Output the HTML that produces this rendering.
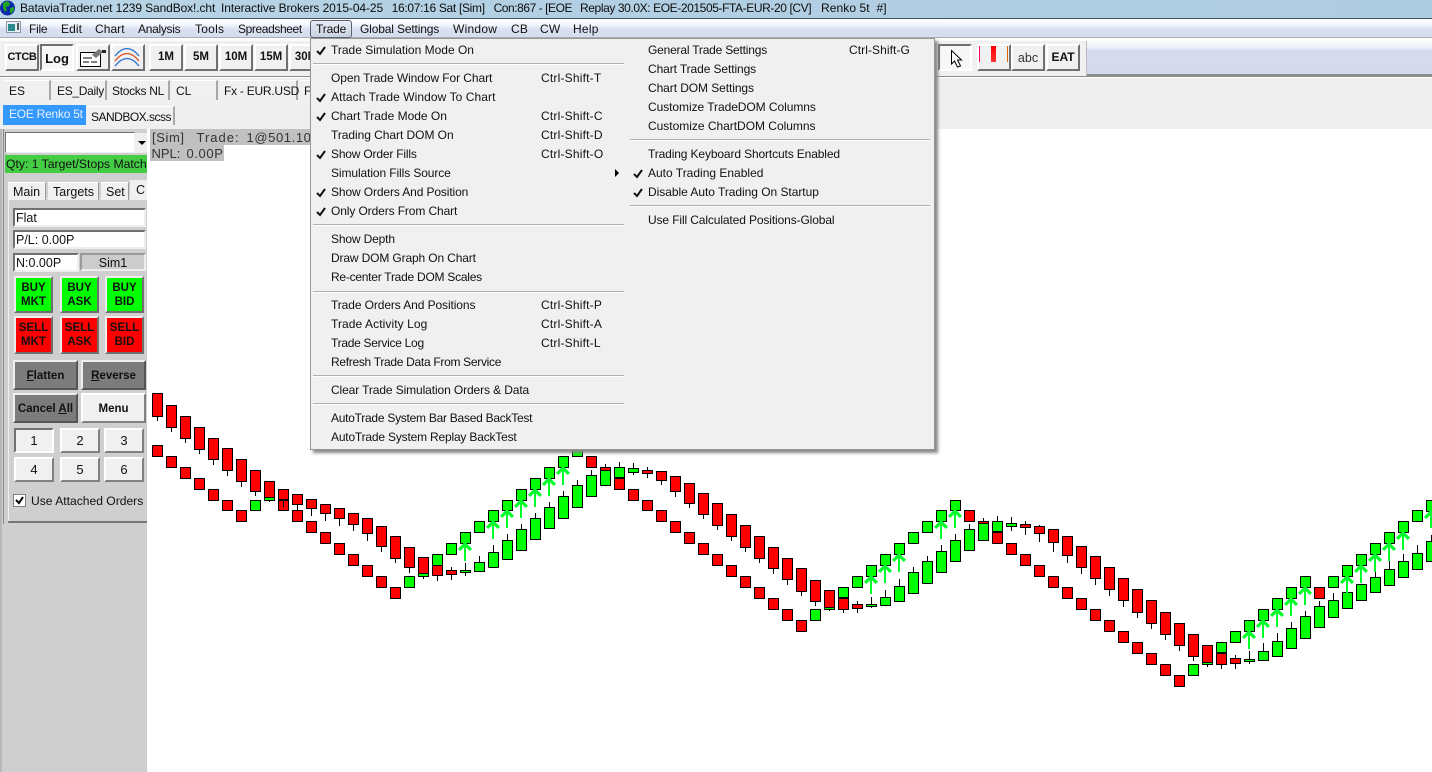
<!DOCTYPE html>
<html><head><meta charset="utf-8"><title>BataviaTrader</title>
<style>
html,body{margin:0;padding:0;width:1432px;height:772px;overflow:hidden;background:#fff}
body{position:relative;font:12px/16px "Liberation Sans",sans-serif;color:#111}
div,svg{position:absolute;box-sizing:border-box}
.t{white-space:pre;height:16px;line-height:16px}
.b{background:#f0f0f0;border:2px solid;border-color:#fff #707070 #707070 #fff;text-align:center;font-weight:bold;font-size:11.5px;color:#111;width:34px;height:27px;top:44px;line-height:23px}
.tab{background:#f0f0f0;border-right:2px solid #a8a8a8;border-top:1px solid #fff;padding-left:4px;line-height:20px;font-size:12px;white-space:pre}
.sep{height:2px;background:#b0b0b0;border-bottom:1px solid #fff}
.o{background:#fff;border:2px solid;border-color:#707070 #eee #eee #707070;padding-left:1px;line-height:17px;font-size:12.5px}
.k{border:2px solid;border-color:#eee #707070 #707070 #eee;text-align:center;font-weight:bold;font-size:11.5px;line-height:14px;padding-top:3px;color:#111}
.g{background:#00ff00}.r{background:#ff0000}
.gb{background:#7c7c7c;border:2px solid;border-color:#eee #555 #555 #eee;text-align:center;font-weight:bold;font-size:11.5px;line-height:28px;color:#111}
.n{background:#f0f0f0;border:2px solid;border-color:#fff #808080 #808080 #fff;text-align:center;line-height:21px;font-size:13px}
.m{margin-top:1px}
.s{margin-top:1px;letter-spacing:.2px}
.st{font-size:13px;color:#333;white-space:pre;height:16px;line-height:17px}
.h{top:0;font-size:12px;color:#0c0c0c}
</style></head><body>

<!-- chart -->
<svg width="1432" height="772" style="left:0;top:0" shape-rendering="crispEdges">
<path fill="none" stroke="#000" d="M157.5 417V421M171.5 428V432M185.5 439V443M199.5 450V454M213.5 460V465M227.5 471V476M241.5 482V487M255.5 492V496M269.5 501V502M297.5 505V510M311.5 509V516M325.5 514V521M339.5 519V526M353.5 525V531M367.5 534V541M381.5 547V552M395.5 559V563M409.5 568V573M423.5 577V579M437.5 576V581M451.5 567V580M465.5 563V576M479.5 556V562M493.5 545V552M507.5 534V540M521.5 524V529M535.5 513V518M549.5 502V507M563.5 491V496M577.5 480V485M591.5 470V475M605.5 464V467M619.5 462V467M633.5 463V475M647.5 467V478M661.5 481V485M675.5 492V497M689.5 504V508M703.5 515V519M717.5 526V530M731.5 537V541M745.5 548V552M759.5 559V563M773.5 569V574M787.5 580V585M801.5 592V596M815.5 602V606M829.5 610V611M843.5 610V613M857.5 601V613M871.5 597V608M885.5 590V597M899.5 579V586M913.5 567V572M927.5 556V561M941.5 545V551M955.5 534V540M969.5 524V529M983.5 518V521M997.5 516V521M1011.5 517V531M1025.5 521V535M1039.5 525V542M1053.5 543V552M1067.5 556V563M1081.5 568V574M1095.5 579V585M1109.5 590V596M1123.5 601V607M1137.5 613V618M1151.5 624V629M1165.5 635V640M1179.5 646V651M1193.5 657V661M1207.5 665V667M1221.5 665V669M1235.5 655V669M1249.5 651V664M1263.5 643V651M1277.5 633V641M1291.5 622V628M1305.5 611V616M1319.5 601V606M1333.5 593V600M1375.5 572V577M1389.5 561V569M1403.5 554V561M1417.5 545V553M1431.5 535V541"/>
<path fill="#00ff00" stroke="#000" d="M250.5 500.5h10V510.5h-10zM264.5 497.5h10V500.5h-10zM404.5 576.5h10V587.5h-10zM418.5 573.5h10V576.5h-10zM432.5 554.5h10V565.5h-10zM446.5 543.5h10V554.5h-10zM460.5 532.5h10V543.5h-10zM460.5 570.5h10V572.5h-10zM474.5 521.5h10V532.5h-10zM474.5 562.5h10V571.5h-10zM488.5 510.5h10V521.5h-10zM488.5 552.5h10V567.5h-10zM502.5 500.5h10V510.5h-10zM502.5 540.5h10V559.5h-10zM516.5 489.5h10V500.5h-10zM516.5 529.5h10V550.5h-10zM530.5 478.5h10V489.5h-10zM530.5 518.5h10V539.5h-10zM544.5 467.5h10V478.5h-10zM544.5 507.5h10V528.5h-10zM558.5 456.5h10V467.5h-10zM558.5 496.5h10V518.5h-10zM572.5 445.5h10V456.5h-10zM572.5 485.5h10V507.5h-10zM586.5 475.5h10V496.5h-10zM600.5 470.5h10V485.5h-10zM614.5 467.5h10V477.5h-10zM628.5 468.5h10V472.5h-10zM810.5 609.5h10V620.5h-10zM824.5 607.5h10V609.5h-10zM838.5 587.5h10V597.5h-10zM852.5 576.5h10V587.5h-10zM866.5 565.5h10V576.5h-10zM866.5 604.5h10V606.5h-10zM880.5 554.5h10V565.5h-10zM880.5 597.5h10V605.5h-10zM894.5 543.5h10V554.5h-10zM894.5 586.5h10V601.5h-10zM908.5 532.5h10V543.5h-10zM908.5 572.5h10V593.5h-10zM922.5 521.5h10V532.5h-10zM922.5 561.5h10V583.5h-10zM936.5 510.5h10V521.5h-10zM936.5 551.5h10V572.5h-10zM950.5 500.5h10V510.5h-10zM950.5 540.5h10V561.5h-10zM964.5 529.5h10V550.5h-10zM978.5 523.5h10V540.5h-10zM992.5 521.5h10V531.5h-10zM1006.5 523.5h10V526.5h-10zM1188.5 664.5h10V675.5h-10zM1202.5 662.5h10V664.5h-10zM1216.5 642.5h10V652.5h-10zM1230.5 631.5h10V642.5h-10zM1244.5 620.5h10V631.5h-10zM1244.5 659.5h10V661.5h-10zM1258.5 609.5h10V620.5h-10zM1258.5 651.5h10V660.5h-10zM1272.5 598.5h10V609.5h-10zM1272.5 641.5h10V656.5h-10zM1286.5 587.5h10V598.5h-10zM1286.5 628.5h10V648.5h-10zM1300.5 576.5h10V587.5h-10zM1300.5 616.5h10V638.5h-10zM1314.5 606.5h10V627.5h-10zM1328.5 576.5h10V587.5h-10zM1328.5 600.5h10V617.5h-10zM1342.5 565.5h10V576.5h-10zM1342.5 592.5h10V608.5h-10zM1356.5 554.5h10V565.5h-10zM1356.5 584.5h10V600.5h-10zM1370.5 543.5h10V554.5h-10zM1370.5 577.5h10V592.5h-10zM1384.5 532.5h10V543.5h-10zM1384.5 569.5h10V585.5h-10zM1398.5 521.5h10V532.5h-10zM1398.5 561.5h10V577.5h-10zM1412.5 510.5h10V521.5h-10zM1412.5 553.5h10V569.5h-10zM1426.5 500.5h10V511.5h-10zM1426.5 541.5h10V561.5h-10z"/>
<path fill="#ff0000" stroke="#000" d="M152.5 393.5h10V416.5h-10zM152.5 445.5h10V456.5h-10zM166.5 405.5h10V427.5h-10zM166.5 456.5h10V467.5h-10zM180.5 416.5h10V438.5h-10zM180.5 467.5h10V478.5h-10zM194.5 427.5h10V449.5h-10zM194.5 478.5h10V489.5h-10zM208.5 438.5h10V459.5h-10zM208.5 489.5h10V500.5h-10zM222.5 448.5h10V470.5h-10zM222.5 500.5h10V510.5h-10zM236.5 459.5h10V481.5h-10zM236.5 510.5h10V521.5h-10zM250.5 470.5h10V491.5h-10zM264.5 481.5h10V497.5h-10zM278.5 489.5h10V499.5h-10zM278.5 500.5h10V510.5h-10zM292.5 494.5h10V504.5h-10zM292.5 510.5h10V521.5h-10zM306.5 499.5h10V508.5h-10zM306.5 521.5h10V532.5h-10zM320.5 504.5h10V513.5h-10zM320.5 532.5h10V543.5h-10zM334.5 508.5h10V518.5h-10zM334.5 543.5h10V554.5h-10zM348.5 513.5h10V524.5h-10zM348.5 554.5h10V565.5h-10zM362.5 518.5h10V533.5h-10zM362.5 565.5h10V576.5h-10zM376.5 526.5h10V546.5h-10zM376.5 576.5h10V587.5h-10zM390.5 536.5h10V558.5h-10zM390.5 587.5h10V598.5h-10zM404.5 547.5h10V567.5h-10zM418.5 557.5h10V573.5h-10zM432.5 565.5h10V575.5h-10zM446.5 570.5h10V574.5h-10zM586.5 456.5h10V467.5h-10zM600.5 467.5h10V470.5h-10zM614.5 478.5h10V489.5h-10zM628.5 489.5h10V500.5h-10zM642.5 470.5h10V473.5h-10zM642.5 500.5h10V510.5h-10zM656.5 471.5h10V480.5h-10zM656.5 510.5h10V521.5h-10zM670.5 476.5h10V491.5h-10zM670.5 521.5h10V532.5h-10zM684.5 483.5h10V503.5h-10zM684.5 532.5h10V543.5h-10zM698.5 493.5h10V514.5h-10zM698.5 543.5h10V554.5h-10zM712.5 503.5h10V525.5h-10zM712.5 554.5h10V565.5h-10zM726.5 514.5h10V536.5h-10zM726.5 565.5h10V576.5h-10zM740.5 525.5h10V547.5h-10zM740.5 576.5h10V587.5h-10zM754.5 536.5h10V558.5h-10zM754.5 587.5h10V598.5h-10zM768.5 547.5h10V568.5h-10zM768.5 598.5h10V609.5h-10zM782.5 558.5h10V579.5h-10zM782.5 609.5h10V620.5h-10zM796.5 568.5h10V591.5h-10zM796.5 620.5h10V631.5h-10zM810.5 580.5h10V601.5h-10zM824.5 590.5h10V607.5h-10zM838.5 598.5h10V609.5h-10zM852.5 604.5h10V608.5h-10zM964.5 510.5h10V521.5h-10zM978.5 521.5h10V523.5h-10zM992.5 532.5h10V543.5h-10zM1006.5 543.5h10V554.5h-10zM1020.5 524.5h10V527.5h-10zM1020.5 554.5h10V565.5h-10zM1034.5 526.5h10V533.5h-10zM1034.5 565.5h10V576.5h-10zM1048.5 529.5h10V542.5h-10zM1048.5 576.5h10V587.5h-10zM1062.5 536.5h10V555.5h-10zM1062.5 587.5h10V598.5h-10zM1076.5 546.5h10V567.5h-10zM1076.5 598.5h10V609.5h-10zM1090.5 556.5h10V578.5h-10zM1090.5 609.5h10V620.5h-10zM1104.5 567.5h10V589.5h-10zM1104.5 620.5h10V631.5h-10zM1118.5 578.5h10V600.5h-10zM1118.5 631.5h10V642.5h-10zM1132.5 589.5h10V612.5h-10zM1132.5 642.5h10V653.5h-10zM1146.5 600.5h10V623.5h-10zM1146.5 653.5h10V664.5h-10zM1160.5 612.5h10V634.5h-10zM1160.5 664.5h10V675.5h-10zM1174.5 623.5h10V645.5h-10zM1174.5 675.5h10V686.5h-10zM1188.5 634.5h10V656.5h-10zM1202.5 645.5h10V662.5h-10zM1216.5 653.5h10V664.5h-10zM1230.5 658.5h10V663.5h-10zM1314.5 587.5h10V598.5h-10z"/>
<path fill="none" stroke="#000" d="M283.5 500V507"/>
<path fill="none" stroke="#00ff2a" stroke-width="2" d="M465 561V544M493 539V522M507 528V511M521 518V501M535 507V490M549 496V479M563 485V468M871 594V577M885 583V566M899 572V555M941 539V522M955 528V511M1249 649V632M1263 638V621M1277 627V610M1291 616V599M1305 605V588M1347 594V577M1361 583V566M1375 572V555M1389 561V544M1403 550V533M1431 528V512"/>
<path fill="none" stroke="#00ff2a" stroke-width="3" d="M459 550l6-6 6 6M487 528l6-6 6 6M501 517l6-6 6 6M515 507l6-6 6 6M529 496l6-6 6 6M543 485l6-6 6 6M557 474l6-6 6 6M865 583l6-6 6 6M879 572l6-6 6 6M893 561l6-6 6 6M935 528l6-6 6 6M949 517l6-6 6 6M1243 638l6-6 6 6M1257 627l6-6 6 6M1271 616l6-6 6 6M1285 605l6-6 6 6M1299 594l6-6 6 6M1341 583l6-6 6 6M1355 572l6-6 6 6M1369 561l6-6 6 6M1383 550l6-6 6 6M1397 539l6-6 6 6M1425 518l6-6 6 6"/>
</svg>

<!-- title bar -->
<div style="left:0;top:0;width:1432px;height:18px;background:linear-gradient(90deg,#b9d5e6,#b2cfe3 40%,#afcde2)"></div>
<svg width="16" height="16" style="left:0;top:0" viewBox="0 0 16 16"><circle cx="7.5" cy="8" r="7.5" fill="#0d2aa8"/><path d="M3 3l4-2 3 2-1 3-3 1 1 3-2 2-2-4zM10 8l4-1 0 3-3 4-1-2z" fill="#1fa51f"/></svg>
<div class="t h" style="left:20px;letter-spacing:-.11px">BataviaTrader.net 1239 SandBox!.cht</div>
<div class="t h" style="left:221px;letter-spacing:-.09px">Interactive Brokers 2015-04-25</div>
<div class="t h" style="left:391.6px;letter-spacing:-.31px">16:07:16 Sat [Sim]</div>
<div class="t h" style="left:493.6px;letter-spacing:-.45px">Con:867 - [EOE</div>
<div class="t h" style="left:580px;letter-spacing:-.4px">Replay 30.0X: EOE-201505-FTA-EUR-20 [CV]</div>
<div class="t h" style="left:821px;letter-spacing:.08px">Renko 5t  #]</div>

<!-- menu bar -->
<div style="left:0;top:18px;width:1432px;height:20px;background:linear-gradient(#fff 0,#f4f6fb 30%,#d8dff0 60%,#d6ddee);border-top:1px solid #46535f;border-bottom:1px solid #a9adb5"></div>
<svg width="16" height="13" style="left:6px;top:21px"><rect x=".5" y=".5" width="14" height="11" fill="#e8eef5" stroke="#8a9aaa"/><rect x="2" y="3" width="7" height="7" fill="#2b8a8a"/><rect x="11" y="2" width="2" height="7" fill="#555"/></svg>
<div class="t" style="left:29px;top:21px;letter-spacing:-.25px">File</div>
<div class="t" style="left:61px;top:21px;letter-spacing:.1px">Edit</div>
<div class="t" style="left:95px;top:21px;letter-spacing:.05px">Chart</div>
<div class="t" style="left:138px;top:21px;letter-spacing:-.3px">Analysis</div>
<div class="t" style="left:195px;top:21px;letter-spacing:.25px">Tools</div>
<div class="t" style="left:238px;top:21px;letter-spacing:-.39px">Spreadsheet</div>
<div style="left:310px;top:20px;width:42px;height:18px;border:1px solid #5a6470;border-radius:3px;background:linear-gradient(#e8ecf4,#c9d1e2)"></div>
<div class="t" style="left:316px;top:21px;letter-spacing:-.15px">Trade</div>
<div class="t" style="left:360px;top:21px;letter-spacing:-.15px">Global Settings</div>
<div class="t" style="left:453px;top:21px;letter-spacing:.25px">Window</div>
<div class="t" style="left:511px;top:21px;letter-spacing:.25px">CB</div>
<div class="t" style="left:540px;top:21px;letter-spacing:.25px">CW</div>
<div class="t" style="left:573px;top:21px;letter-spacing:.25px">Help</div>

<!-- toolbar -->
<div style="left:0;top:38px;width:1432px;height:39px;background:linear-gradient(#fff 0,#eef0f8 25%,#d6dbed 32%,#d4d9ec 92%,#8c8c8c 93%,#8c8c8c 100%)"></div>
<div style="left:0;top:41px;width:1087px;height:35px;background:#f0f0f0;border-right:1px solid #bbb"></div>
<div class="b" style="left:5px;font-size:11px;letter-spacing:-.4px">CTCB</div>
<div class="b" style="left:40px;line-height:25px;font-size:13px;border-color:#707070 #fff #fff #707070;background:#f7f7f7">Log</div>
<div class="b" style="left:76px"></div>
<svg width="30" height="20" style="left:78px;top:47px"><path d="M2.5 5.5h20v14h-20z" fill="#fff" stroke="#000"/><path d="M5 11h9M5 15h6M13 15h6" stroke="#000"/><path d="M14 8l7-6 4 3-7 6z" fill="#777"/><path d="M24 3h4v3h-4z" fill="#222"/></svg>
<div class="b" style="left:111px"></div>
<svg width="29" height="22" style="left:113px;top:47px" fill="none" stroke-width="1.3"><path d="M2 9Q14 -6 26 9" stroke="#2a6fd0"/><path d="M2 14Q14 -1 26 14" stroke="#e05020"/><path d="M2 19Q14 4 26 19" stroke="#2a6fd0"/></svg>
<div class="b" style="left:149px">1M</div>
<div class="b" style="left:184px">5M</div>
<div class="b" style="left:219px">10M</div>
<div class="b" style="left:254px">15M</div>
<div class="b" style="left:289px">30M</div>
<div class="b" style="left:938px;border-color:#707070 #fff #fff #707070;background:#f7f7f7"></div>
<svg width="14" height="24" style="left:950px;top:48px"><path d="M1.5 2.5V16l3-3 3 6 3-1-3-6h4z" fill="#fff" stroke="#000"/></svg>
<div class="b" style="left:977px"></div>
<div style="left:979px;top:46px;width:1px;height:16px;background:#f06"></div>
<div style="left:991px;top:46px;width:5px;height:16px;background:linear-gradient(#f00,#f33)"></div>
<div style="left:1007px;top:46px;width:1px;height:16px;background:#d60"></div>
<div class="b" style="left:1011px;font-weight:normal;font-size:12.5px;line-height:25px;color:#333">abc</div>
<div class="b" style="left:1046px;line-height:22px;font-size:12px">EAT</div>

<!-- tab rows -->
<div style="left:0;top:77px;width:1432px;height:52px;background:#efefef"></div>
<div style="left:2px;top:77px;width:1430px;height:1px;background:#fff"></div>
<div class="tab" style="left:5px;top:80px;width:46px;height:20px">ES</div>
<div class="tab" style="left:53px;top:80px;width:54px;height:20px;letter-spacing:-.3px">ES_Daily</div>
<div class="tab" style="left:108px;top:80px;width:62px;height:20px;letter-spacing:-.3px">Stocks NL</div>
<div class="tab" style="left:172px;top:80px;width:46px;height:20px">CL</div>
<div class="tab" style="left:220px;top:80px;width:78px;height:20px;letter-spacing:-.25px">Fx - EUR.USD</div>
<div class="tab" style="left:300px;top:80px;width:12px;height:20px">F</div>
<div class="tab" style="left:3px;top:105px;width:83px;height:20px;background:#3399ff;color:#e8f0ff;border:0;padding-left:6px;line-height:18px;letter-spacing:-.25px">EOE Renko 5t</div>
<div class="tab" style="left:87px;top:106px;width:88px;height:19px;padding-left:4px;line-height:20px;letter-spacing:-.5px">SANDBOX.scss</div>

<!-- left panel -->
<div style="left:0;top:129px;width:147px;height:643px;background:#cfcfcf"></div>
<div style="left:0;top:129px;width:2px;height:643px;background:#b8b8b8"></div>
<div style="left:3px;top:129px;width:1px;height:395px;background:#8a8a8a"></div>
<div style="left:5px;top:132px;width:130px;height:21px;background:#fff;border:1px solid;border-color:#707070 #eee #eee #707070"></div>
<div style="left:135px;top:133px;width:12px;height:20px;background:#efefef"></div>
<div style="left:138px;top:141px;width:0;height:0;border:4px solid transparent;border-top:4px solid #000"></div>
<div style="left:5px;top:155px;width:142px;height:18px;background:#44cc44;line-height:18px;padding-left:1px;font-size:12.2px;white-space:pre">Qty: 1 Target/Stops Match</div>

<div style="left:8px;top:198px;width:139px;height:323px;border-left:1px solid #f0f0f0;border-top:1px solid #f0f0f0"></div>
<div class="tab" style="left:8px;top:182px;width:38px;height:18px;line-height:18px;padding-left:5px;font-size:12.5px;border-right:1px solid #999">Main</div>
<div class="tab" style="left:48px;top:182px;width:51px;height:18px;line-height:18px;padding-left:5px;font-size:12.5px;border-right:1px solid #999">Targets</div>
<div class="tab" style="left:101px;top:182px;width:28px;height:18px;line-height:18px;padding-left:5px;font-size:12.5px;border-right:1px solid #999">Set</div>
<div class="tab" style="left:130px;top:180px;width:17px;height:20px;line-height:20px;padding-left:6px;font-size:12.5px;border:0">C</div>

<div class="o" style="left:13px;top:208px;width:133px;height:19px">Flat</div>
<div class="o" style="left:13px;top:230px;width:133px;height:19px">P/L: 0.00P</div>
<div class="o" style="left:13px;top:253px;width:66px;height:19px">N:0.00P</div>
<div style="left:80px;top:253px;width:66px;height:18px;background:#ccc;border:2px solid;border-color:#999 #eee #eee #999;text-align:center;line-height:17px;font-size:12.5px">Sim1</div>

<div class="k g" style="left:14px;top:276px;width:39px;height:37px">BUY<br>MKT</div>
<div class="k g" style="left:60px;top:276px;width:39px;height:37px">BUY<br>ASK</div>
<div class="k g" style="left:105px;top:276px;width:39px;height:37px">BUY<br>BID</div>
<div class="k r" style="left:14px;top:316px;width:39px;height:38px">SELL<br>MKT</div>
<div class="k r" style="left:60px;top:316px;width:39px;height:38px">SELL<br>ASK</div>
<div class="k r" style="left:105px;top:316px;width:39px;height:38px">SELL<br>BID</div>

<div class="gb" style="left:13px;top:360px;width:65px;height:30px"><u>F</u>latten</div>
<div class="gb" style="left:81px;top:360px;width:65px;height:30px"><u>R</u>everse</div>
<div class="gb" style="left:13px;top:393px;width:65px;height:30px">Cancel <u>A</u>ll</div>
<div class="gb" style="left:81px;top:393px;width:65px;height:30px;background:#f0f0f0;border-color:#fff #808080 #808080 #fff">Menu</div>

<div class="n" style="left:14px;top:428px;width:40px;height:25px;border-color:#707070 #fff #fff #707070">1</div>
<div class="n" style="left:60px;top:428px;width:40px;height:25px">2</div>
<div class="n" style="left:104px;top:428px;width:40px;height:25px">3</div>
<div class="n" style="left:14px;top:457px;width:40px;height:25px">4</div>
<div class="n" style="left:60px;top:457px;width:40px;height:25px">5</div>
<div class="n" style="left:104px;top:457px;width:40px;height:25px">6</div>

<svg width="13" height="13" style="left:13px;top:494px"><path d="M.5.5h12v12H.5z" fill="#fff" stroke="#808080"/><path d="M3 6l3 3 4-6" fill="none" stroke="#000" stroke-width="2"/></svg>
<div class="t" style="left:31px;top:493px;font-size:12.1px">Use Attached Orders</div>
<div style="left:8px;top:521px;width:139px;height:2px;background:#777"></div>

<!-- sim text -->
<div style="left:150px;top:129px;width:160px;height:16px;background:#c0c0c0"></div>
<div style="left:150px;top:145px;width:74px;height:16px;background:#c0c0c0"></div>
<div class="st" style="left:152px;top:129px;letter-spacing:.6px">[Sim]</div>
<div class="st" style="left:196.5px;top:129px;letter-spacing:1px">Trade:</div>
<div class="st" style="left:246.5px;top:129px;letter-spacing:.6px">1@501.10</div>
<div class="st" style="left:151.5px;top:145px">NPL:</div>
<div class="st" style="left:186.5px;top:145px;letter-spacing:.6px">0.00P</div>

<!-- dropdown menu -->
<div style="left:310px;top:38px;width:625px;height:412px;background:#f0f0f0;border:1px solid #979797;box-shadow:3px 3px 3px #888"></div>
<div class="t m" style="left:331px;top:41px;letter-spacing:0">Trade Simulation Mode On</div>
<div class="sep" style="left:313px;top:63px;width:311px"></div>
<div class="t m" style="left:331px;top:69px;letter-spacing:-.08px">Open Trade Window For Chart</div><div class="t s" style="left:541px;top:69px">Ctrl-Shift-T</div>
<div class="t m" style="left:331px;top:88px;letter-spacing:.07px">Attach Trade Window To Chart</div>
<div class="t m" style="left:331px;top:107px;letter-spacing:-.01px">Chart Trade Mode On</div><div class="t s" style="left:541px;top:107px">Ctrl-Shift-C</div>
<div class="t m" style="left:331px;top:126px;letter-spacing:-.05px">Trading Chart DOM On</div><div class="t s" style="left:541px;top:126px">Ctrl-Shift-D</div>
<div class="t m" style="left:331px;top:145px;letter-spacing:-.19px">Show Order Fills</div><div class="t s" style="left:541px;top:145px">Ctrl-Shift-O</div>
<div class="t m" style="left:331px;top:164px;letter-spacing:-.1px">Simulation Fills Source</div>
<div style="left:615px;top:169px;width:0;height:0;border:4px solid transparent;border-left:4px solid #000"></div>
<div class="t m" style="left:331px;top:183px;letter-spacing:-.12px">Show Orders And Position</div>
<div class="t m" style="left:331px;top:202px;letter-spacing:-.11px">Only Orders From Chart</div>
<div class="sep" style="left:313px;top:224px;width:311px"></div>
<div class="t m" style="left:331px;top:230px;letter-spacing:-.15px">Show Depth</div>
<div class="t m" style="left:331px;top:249px;letter-spacing:-.14px">Draw DOM Graph On Chart</div>
<div class="t m" style="left:331px;top:268px;letter-spacing:-.25px">Re-center Trade DOM Scales</div>
<div class="sep" style="left:313px;top:291px;width:311px"></div>
<div class="t m" style="left:331px;top:296px;letter-spacing:-.1px">Trade Orders And Positions</div><div class="t s" style="left:541px;top:296px">Ctrl-Shift-P</div>
<div class="t m" style="left:331px;top:315px;letter-spacing:.08px">Trade Activity Log</div><div class="t s" style="left:541px;top:315px">Ctrl-Shift-A</div>
<div class="t m" style="left:331px;top:334px;letter-spacing:-.28px">Trade Service Log</div><div class="t s" style="left:541px;top:334px">Ctrl-Shift-L</div>
<div class="t m" style="left:331px;top:353px;letter-spacing:-.3px">Refresh Trade Data From Service</div>
<div class="sep" style="left:313px;top:375px;width:311px"></div>
<div class="t m" style="left:331px;top:381px;letter-spacing:-.11px">Clear Trade Simulation Orders &amp; Data</div>
<div class="sep" style="left:313px;top:403px;width:311px"></div>
<div class="t m" style="left:331px;top:409px;letter-spacing:-.26px">AutoTrade System Bar Based BackTest</div>
<div class="t m" style="left:331px;top:428px;letter-spacing:-.19px">AutoTrade System Replay BackTest</div>

<div class="t m" style="left:648px;top:41px;letter-spacing:-.2px">General Trade Settings</div><div class="t m" style="left:849px;top:41px;letter-spacing:.08px">Ctrl-Shift-G</div>
<div class="t m" style="left:648px;top:60px;letter-spacing:-.1px">Chart Trade Settings</div>
<div class="t m" style="left:648px;top:79px;letter-spacing:-.08px">Chart DOM Settings</div>
<div class="t m" style="left:648px;top:98px;letter-spacing:-.06px">Customize TradeDOM Columns</div>
<div class="t m" style="left:648px;top:117px;letter-spacing:-.02px">Customize ChartDOM Columns</div>
<div class="sep" style="left:630px;top:139px;width:300px"></div>
<div class="t m" style="left:648px;top:145px;letter-spacing:-.13px">Trading Keyboard Shortcuts Enabled</div>
<div class="t m" style="left:648px;top:164px;letter-spacing:0">Auto Trading Enabled</div>
<div class="t m" style="left:648px;top:183px;letter-spacing:-.04px">Disable Auto Trading On Startup</div>
<div class="sep" style="left:630px;top:205px;width:300px"></div>
<div class="t m" style="left:648px;top:211px;letter-spacing:-.12px">Use Fill Calculated Positions-Global</div>

<svg width="650" height="220" style="left:310px;top:39px" fill="none" stroke="#111" stroke-width="2"><path d="M7 12l3 3 5-7M7 59l3 3 5-7M7 78l3 3 5-7M7 116l3 3 5-7M7 154l3 3 5-7M7 173l3 3 5-7M324 135l3 3 5-7M324 154l3 3 5-7"/></svg>
</body></html>
